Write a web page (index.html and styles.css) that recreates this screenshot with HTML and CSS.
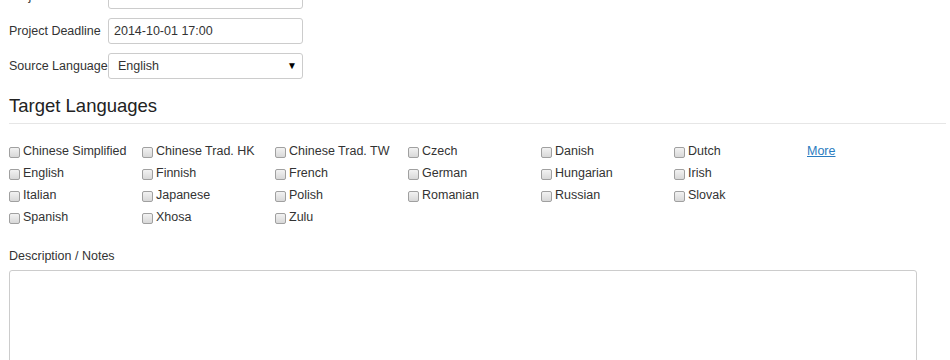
FILE: index.html
```html
<!DOCTYPE html>
<html lang="en">

<head>
    <meta charset="UTF-8">
    <title>New Project</title>
    <link rel="stylesheet" href="styles.css">
</head>

<body>
    <form class="project-form">
        <div class="form-row first-row">
            <label class="form-label">Project Name</label>
            <input type="text" class="form-input" value="">
        </div>
        <div class="form-row">
            <label class="form-label">Project Deadline</label>
            <input type="text" class="form-input" value="2014-10-01 17:00">
        </div>
        <div class="form-row">
            <label class="form-label">Source Language</label>
            <div class="select-wrap">
                <select class="form-select">
                    <option>English</option>
                </select>
                <span class="select-arrow">&#9660;</span>
            </div>
        </div>

        <h3 class="section-title">Target Languages</h3>

        <div class="lang-grid">
            <label class="lang"><input type="checkbox"> Chinese Simplified</label>
            <label class="lang"><input type="checkbox"> Chinese Trad. HK</label>
            <label class="lang"><input type="checkbox"> Chinese Trad. TW</label>
            <label class="lang"><input type="checkbox"> Czech</label>
            <label class="lang"><input type="checkbox"> Danish</label>
            <label class="lang"><input type="checkbox"> Dutch</label>
            <a href="#" class="more-link">More</a>

            <label class="lang"><input type="checkbox"> English</label>
            <label class="lang"><input type="checkbox"> Finnish</label>
            <label class="lang"><input type="checkbox"> French</label>
            <label class="lang"><input type="checkbox"> German</label>
            <label class="lang"><input type="checkbox"> Hungarian</label>
            <label class="lang"><input type="checkbox"> Irish</label>
            <span></span>

            <label class="lang"><input type="checkbox"> Italian</label>
            <label class="lang"><input type="checkbox"> Japanese</label>
            <label class="lang"><input type="checkbox"> Polish</label>
            <label class="lang"><input type="checkbox"> Romanian</label>
            <label class="lang"><input type="checkbox"> Russian</label>
            <label class="lang"><input type="checkbox"> Slovak</label>
            <span></span>

            <label class="lang"><input type="checkbox"> Spanish</label>
            <label class="lang"><input type="checkbox"> Xhosa</label>
            <label class="lang"><input type="checkbox"> Zulu</label>
        </div>

        <label class="notes-label">Description / Notes</label>
        <textarea class="notes"></textarea>
    </form>
</body>

</html>
```

FILE: styles.css
```css
body {
    font-family: "Liberation Sans", Arial, sans-serif;
    font-size: 12.5px;
    color: #333;
    margin: 0;
    padding: 0 9px;
    background-color: #fff;
    overflow: hidden;
}

.project-form {
    display: flex;
    flex-direction: column;
}

.form-row {
    display: flex;
    align-items: center;
    height: 26px;
    margin-bottom: 9px;
}

.first-row {
    margin-top: -17px;
}

.form-label {
    width: 99px;
    white-space: nowrap;
}

.form-input,
.form-select {
    box-sizing: border-box;
    width: 195px;
    height: 26px;
    border: 1px solid #ccc;
    border-radius: 3px;
    padding: 0 5px;
    font-family: inherit;
    font-size: 12.5px;
    color: #333;
    background-color: #fff;
}

.select-wrap {
    position: relative;
}

.form-select {
    appearance: none;
    -webkit-appearance: none;
    padding-left: 9px;
    display: block;
}

.select-arrow {
    position: absolute;
    right: 6px;
    top: 7px;
    font-size: 10px;
    color: #000;
    pointer-events: none;
}

.section-title {
    font-size: 18.5px;
    font-weight: normal;
    color: #222;
    margin: 7px 0 0 0;
    padding-bottom: 6px;
    border-bottom: 1px solid #e6e6e6;
    margin-right: -5px;
}

.lang-grid {
    display: grid;
    grid-template-columns: repeat(7, 133px);
    grid-auto-rows: 22px;
    margin-top: 16px;
}

.lang {
    display: flex;
    align-items: center;
    white-space: nowrap;
}

.lang input {
    appearance: none;
    -webkit-appearance: none;
    box-sizing: border-box;
    width: 11px;
    height: 11px;
    margin: 3px 3px 0 0;
    border: 1px solid #a0a0a0;
    border-radius: 2px;
    background: linear-gradient(#f2f2f2, #d8d8d8);
}

.more-link {
    color: #2a7cc0;
    text-decoration: underline;
    align-self: center;
}

.notes-label {
    margin-top: 21px;
}

.notes {
    box-sizing: border-box;
    width: 908px;
    height: 120px;
    margin-top: 7px;
    border: 1px solid #ccc;
    border-radius: 3px;
    resize: none;
}
```
